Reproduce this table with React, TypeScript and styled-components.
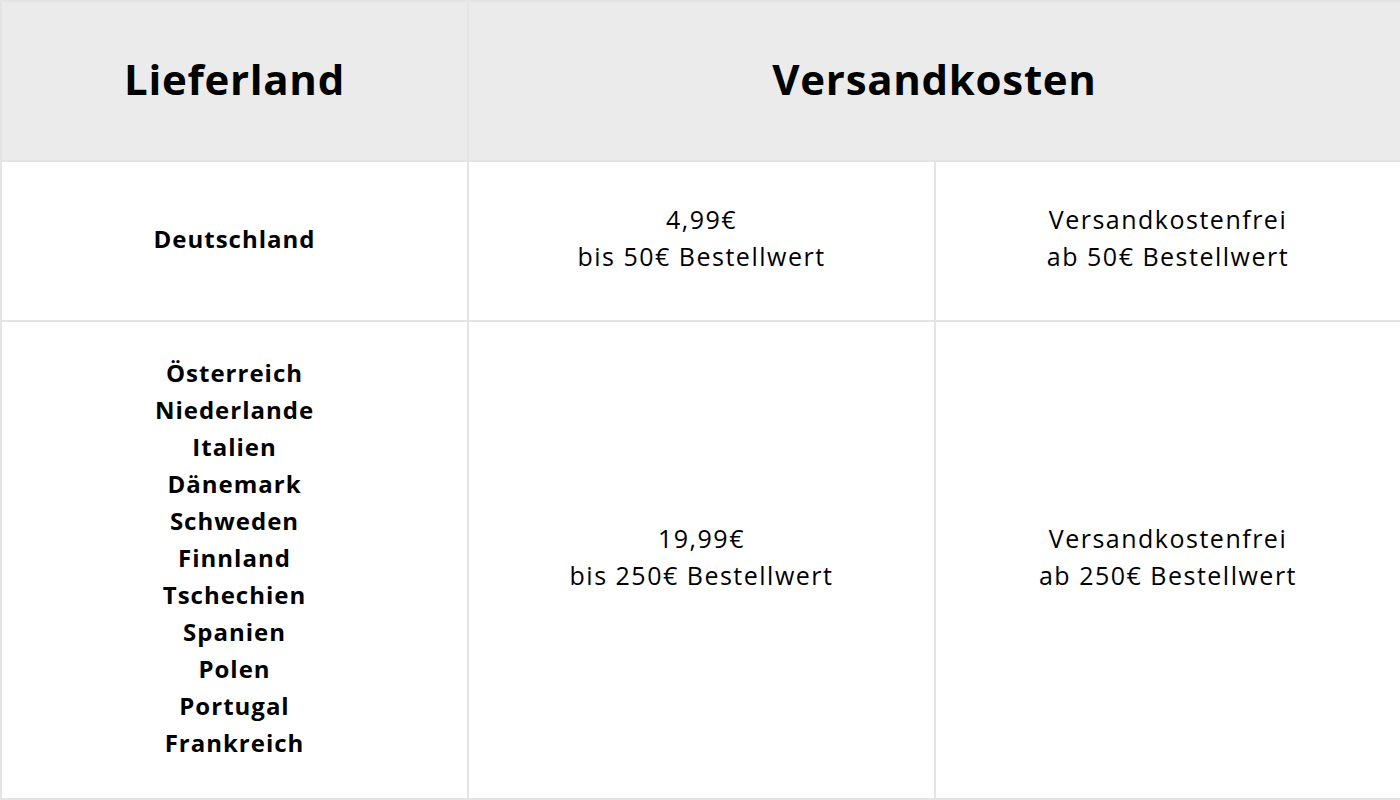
import styled, { createGlobalStyle } from "styled-components";

const GlobalStyle = createGlobalStyle`
    html, body {
        margin: 0;
        padding: 0;
        background: #ffffff;
    }
    body {
        font-family: "Open Sans", "Liberation Sans", sans-serif;
        color: #000000;
    }
`;

const Table = styled.div`
    display: grid;
    grid-template-columns: 465px 465px 464px;
    grid-template-rows: 158px 158px 476px;
    gap: 2px;
    width: 1400px;
    height: 800px;
    box-sizing: border-box;
    padding: 2px;
    background-color: #e4e4e4;
`;

const HeadCell = styled.div<{ $span?: number }>`
    grid-column: span ${(p) => p.$span || 1};
    display: flex;
    align-items: center;
    justify-content: center;
    background-color: #ebebeb;
    font-size: 42px;
    font-weight: 700;
    letter-spacing: 0.7px;
    padding-bottom: 6px;
`;

const Cell = styled.div<{ $bold?: boolean }>`
    display: flex;
    flex-direction: column;
    align-items: center;
    justify-content: center;
    background-color: #ffffff;
    text-align: center;
    font-size: ${(p) => (p.$bold ? 24 : 25)}px;
    line-height: 37px;
    font-weight: ${(p) => (p.$bold ? 700 : 400)};
    letter-spacing: ${(p) => (p.$bold ? 1 : 1.5)}px;
    padding-bottom: 6px;
`;

const countries = [
    "Österreich",
    "Niederlande",
    "Italien",
    "Dänemark",
    "Schweden",
    "Finnland",
    "Tschechien",
    "Spanien",
    "Polen",
    "Portugal",
    "Frankreich",
];

export default function App() {
    return (
        <>
            <GlobalStyle />
            <Table>
                <HeadCell>Lieferland</HeadCell>
                <HeadCell $span={2}>Versandkosten</HeadCell>

                <Cell $bold>Deutschland</Cell>
                <Cell>
                    <span>4,99€</span>
                    <span>bis 50€ Bestellwert</span>
                </Cell>
                <Cell>
                    <span>Versandkostenfrei</span>
                    <span>ab 50€ Bestellwert</span>
                </Cell>

                <Cell $bold>
                    {countries.map((c) => (
                        <span key={c}>{c}</span>
                    ))}
                </Cell>
                <Cell>
                    <span>19,99€</span>
                    <span>bis 250€ Bestellwert</span>
                </Cell>
                <Cell>
                    <span>Versandkostenfrei</span>
                    <span>ab 250€ Bestellwert</span>
                </Cell>
            </Table>
        </>
    );
}
